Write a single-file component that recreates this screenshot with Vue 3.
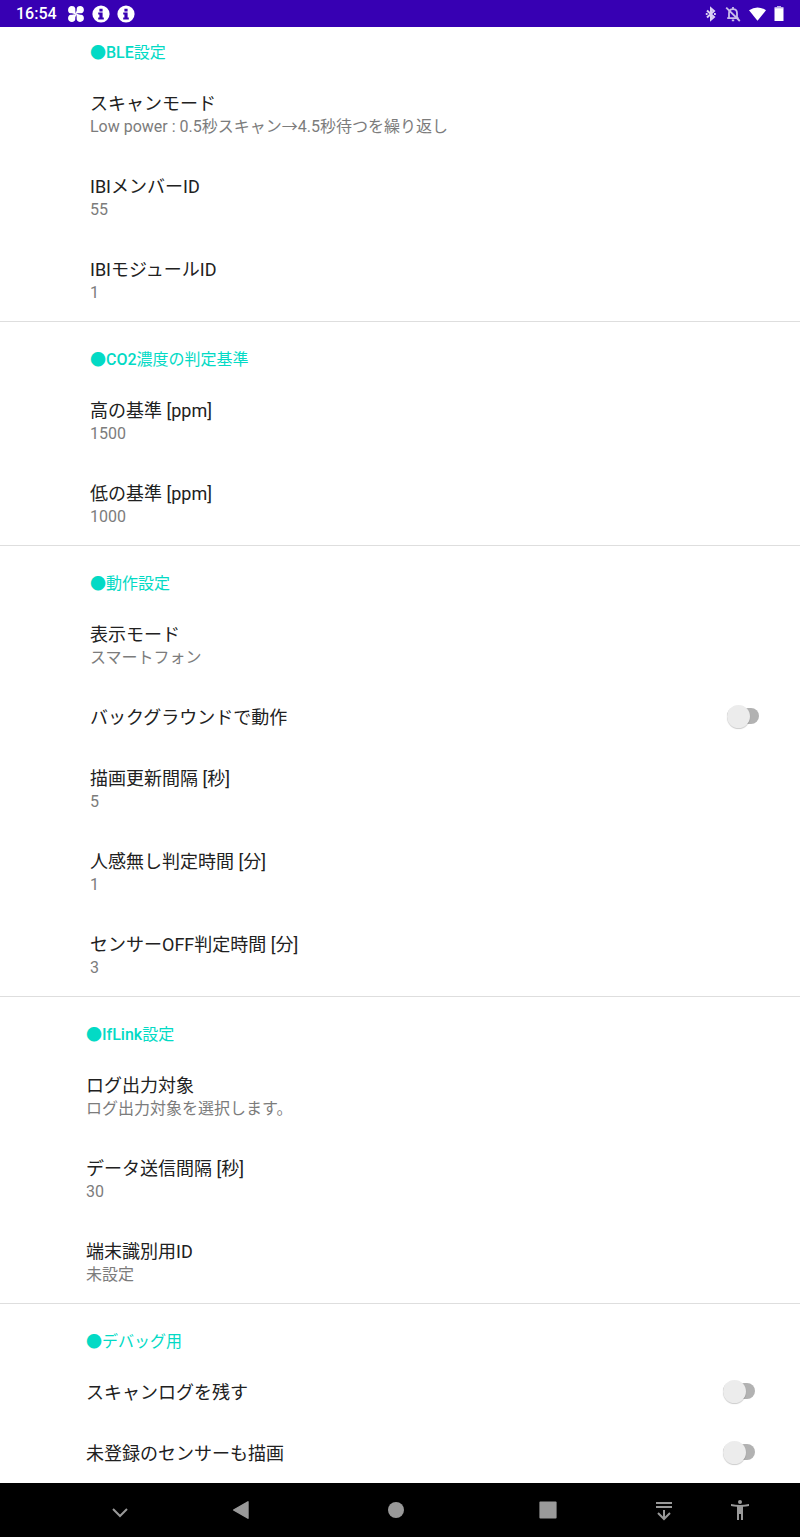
<script setup>
import { reactive } from 'vue'

const sections = reactive([
  {
    latin: 'BLE',
    title: '設定',
    items: [
      { title: 'スキャンモード', summary: 'Low power : 0.5秒スキャン→4.5秒待つを繰り返し' },
      { title: 'IBIメンバーID', summary: '55' },
      { title: 'IBIモジュールID', summary: '1' }
    ]
  },
  {
    latin: 'CO2',
    title: '濃度の判定基準',
    items: [
      { title: '高の基準 [ppm]', summary: '1500' },
      { title: '低の基準 [ppm]', summary: '1000' }
    ]
  },
  {
    latin: '',
    title: '動作設定',
    items: [
      { title: '表示モード', summary: 'スマートフォン' },
      { title: 'バックグラウンドで動作', on: false },
      { title: '描画更新間隔 [秒]', summary: '5' },
      { title: '人感無し判定時間 [分]', summary: '1' },
      { title: 'センサーOFF判定時間 [分]', summary: '3' }
    ]
  },
  {
    latin: 'IfLink',
    title: '設定',
    shifted: true,
    items: [
      { title: 'ログ出力対象', summary: 'ログ出力対象を選択します。' },
      { title: 'データ送信間隔 [秒]', summary: '30' },
      { title: '端末識別用ID', summary: '未設定' }
    ]
  },
  {
    latin: '',
    title: 'デバッグ用',
    shifted: true,
    items: [
      { title: 'スキャンログを残す', on: false },
      { title: '未登録のセンサーも描画', on: false }
    ]
  }
])
</script>

<template>
  <div class="screen">
    <header class="status">
      <div class="group">
        <span class="clock">16:54</span>
        <svg class="icon" viewBox="0 0 18 18" fill="#fff" aria-hidden="true">
          <path
            v-for="a in [0, 90, 180, 270]"
            :key="a"
            :transform="`rotate(${a} 9 9)`"
            d="M9.2 9.4C7 9.2 5.8 8 4.2 8.3C.8 8.6.4 4 2 2.2C3.8.4 7.8.8 8.3 3.6C8.5 5.2 8 6.8 9.2 9.4Z"
          />
        </svg>
        <svg v-for="n in 2" :key="n" class="icon" viewBox="0 0 18 18" aria-hidden="true">
          <circle cx="9" cy="9" r="8.6" fill="#fff" />
          <path d="M7.4 3.8h3.2v2.6H7.4zM6.2 7.6h4.4v5h1.2v1.8H6.2v-1.8h1.2V9.4H6.2z" fill="#3700b3" />
        </svg>
      </div>
      <div class="group right">
        <svg class="bt" viewBox="0 0 12 16" fill="none" stroke="#dcd2f3" stroke-width="2" aria-hidden="true">
          <path d="M2 4.4 9 11 6 13.6V2.4L9 5 2 11.6" />
          <path d="M.8 8h1.8M9 8h1.8" />
        </svg>
        <svg class="bell" viewBox="0 0 16 16" fill="none" stroke="#c9bcea" stroke-width="1.8" aria-hidden="true">
          <path d="M4 12V7.2C4 4.8 5.6 3.2 8 3.2S12 4.8 12 7.2V12M2.2 12.2H13.6M8 1v2M6.8 14.4h2.4" />
          <path d="M1.2 1.6 14.8 15" />
        </svg>
        <svg class="wifi" viewBox="0 0 17 14" aria-hidden="true">
          <path d="M0 3.2Q8.5-2.4 17 3.2L8.5 13.8Z" fill="#fff" />
        </svg>
        <svg class="battery" viewBox="0 0 10 15" aria-hidden="true">
          <path d="M3 0h4v1H3zM.5 1h9v1.4h-9z" fill="#bbaae6" />
          <path d="M.5 2.2h9V15h-9z" fill="#fff" />
        </svg>
      </div>
    </header>

    <main class="settings">
      <section v-for="s in sections" :key="s.latin + s.title" class="section" :class="{ shifted: s.shifted }">
        <h2 class="heading">●<span class="latin">{{ s.latin }}</span>{{ s.title }}</h2>
        <template v-for="i in s.items" :key="i.title">
          <button v-if="i.summary" type="button" class="item">
            <span class="title">{{ i.title }}</span>
            <span class="summary">{{ i.summary }}</span>
          </button>
          <label v-else class="item toggle">
            <span class="title">{{ i.title }}</span>
            <input v-model="i.on" type="checkbox" role="switch" class="switch" />
          </label>
        </template>
      </section>
    </main>

    <nav class="navbar">
      <button type="button" class="key" aria-label="閉じる">
        <svg viewBox="0 0 24 24" fill="none" stroke="#999" stroke-width="2"><path d="M5 11 12 18 19 11" /></svg>
      </button>
      <button type="button" class="key" aria-label="戻る">
        <svg viewBox="0 0 24 24"><path d="M4.6 12 19 3.8V20.2Z" fill="#999" stroke="#999" stroke-width="1.4" stroke-linejoin="round" /></svg>
      </button>
      <button type="button" class="key" aria-label="ホーム">
        <svg viewBox="0 0 24 24"><circle cx="12" cy="12" r="8" fill="#999" /></svg>
      </button>
      <button type="button" class="key" aria-label="履歴">
        <svg viewBox="0 0 24 24"><rect x="3.4" y="3.4" width="17.2" height="17.2" rx="1" fill="#999" /></svg>
      </button>
      <button type="button" class="key" aria-label="通知">
        <svg viewBox="0 0 24 24" fill="none" stroke="#999" stroke-width="2"><path d="M4 5H20M4 9H20M12 12V21M6 15 12 21 18 15" /></svg>
      </button>
      <button type="button" class="key" aria-label="ユーザー補助">
        <svg viewBox="0 0 24 24" fill="#999"><circle cx="12" cy="4" r="2" /><path d="M3 6Q12 8.2 21 6V8Q18 8.6 15 8.8V22H13V16H11V22H9V8.8Q6 8.6 3 8Z" /></svg>
      </button>
    </nav>
  </div>
</template>

<style>
body {
  margin: 0;
  background: #fff;
}
</style>

<style scoped>
.screen {
  display: flex;
  flex-direction: column;
  min-height: 100vh;
  background: #fff;
  font-family: Roboto, "Noto Sans CJK JP", sans-serif;
}

.status {
  display: flex;
  justify-content: space-between;
  align-items: center;
  height: 27px;
  padding: 0 16px;
  background: #3700b3;
  color: #fff;
}

.group {
  display: flex;
  align-items: center;
  gap: 7px;
}

.right {
  gap: 8px;
}

.clock {
  margin-right: 3px;
  font-size: 16px;
  font-weight: 500;
  line-height: 24px;
}

.icon {
  width: 18px;
  height: 18px;
}

.bt {
  width: 12px;
  height: 16px;
}

.bell {
  width: 16px;
  height: 16px;
}

.wifi {
  width: 17px;
  height: 14px;
}

.battery {
  width: 10px;
  height: 15px;
}

.settings {
  flex: 1;
}

.section {
  border-bottom: 1px solid #dedede;
}

.section:last-child {
  border-bottom: 0;
}

.heading {
  margin: 0;
  padding: 27px 90px 9px;
  color: #03dac5;
  font-size: 16px;
  font-weight: 400;
  line-height: 22px;
}

.section:first-child .heading {
  padding-top: 15px;
}

.latin {
  font-weight: 500;
}

.item {
  display: flex;
  flex-direction: column;
  box-sizing: border-box;
  width: 100%;
  margin: 0;
  padding: 19px 41px 19px 90px;
  border: 0;
  background: none;
  font-family: inherit;
  text-align: left;
}

.item:last-child {
  padding-bottom: 18px;
}

.item.toggle {
  flex-direction: row;
  justify-content: space-between;
  align-items: center;
  padding-top: 18px;
  padding-bottom: 18px;
}

.item.toggle:last-child {
  padding-bottom: 17px;
}

.shifted .item {
  padding-left: 86px;
  padding-right: 45px;
}

.shifted .heading {
  padding-left: 86px;
}

.title {
  color: #212121;
  font-size: 18px;
  line-height: 24px;
}

.toggle .title {
  line-height: 25px;
}

.summary {
  color: #7c7c7c;
  font-size: 16px;
  line-height: 21px;
}

.switch {
  appearance: none;
  display: flex;
  align-items: center;
  width: 32px;
  height: 16px;
  margin: 0 0 3px;
  border-radius: 8px;
  background: #b2b2b2;
}

.switch::before {
  content: "";
  flex: none;
  width: 23px;
  height: 23px;
  border-radius: 50%;
  background: #ececec;
  box-shadow: 0 1px 1px rgba(0, 0, 0, 0.2);
}

.switch:checked {
  justify-content: flex-end;
  background: #81ece2;
}

.switch:checked::before {
  background: #03dac5;
}

.navbar {
  display: grid;
  grid-template-columns: 120fr 122fr 188fr 116fr 116fr 36fr;
  height: 54px;
  padding: 0 42px 0 60px;
  background: #000;
}

.key {
  display: flex;
  align-items: center;
  justify-content: center;
  padding: 0;
  border: 0;
  background: none;
}

.key svg {
  width: 24px;
  height: 24px;
}
</style>
